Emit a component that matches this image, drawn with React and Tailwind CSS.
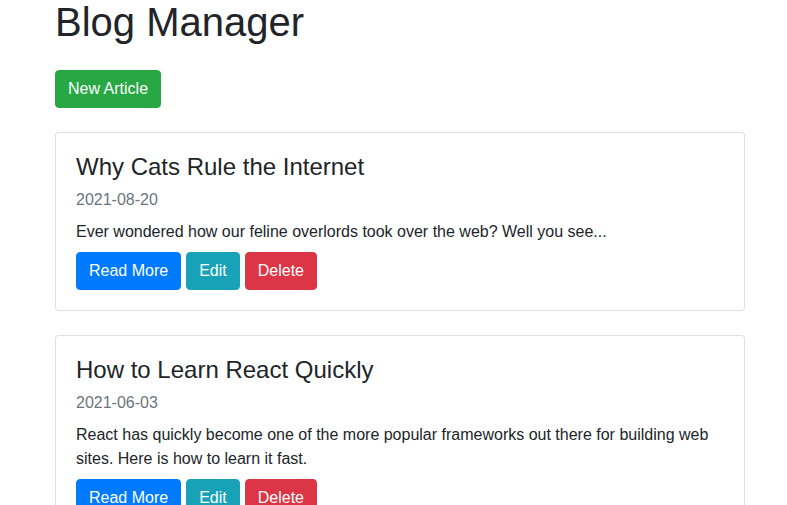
const articles = [
  {
    id: 1,
    title: 'Why Cats Rule the Internet',
    date: '2021-08-20',
    body: 'Ever wondered how our feline overlords took over the web? Well you see...',
  },
  {
    id: 2,
    title: 'How to Learn React Quickly',
    date: '2021-06-03',
    body: 'React has quickly become one of the more popular frameworks out there for building web sites. Here is how to learn it fast.',
  },
]

const Btn = ({ color, children }) => {
  const colors = {
    green: 'bg-[#28a745] border-[#28a745]',
    blue: 'bg-[#007bff] border-[#007bff]',
    teal: 'bg-[#17a2b8] border-[#17a2b8]',
    red: 'bg-[#dc3545] border-[#dc3545]',
  }
  return (
    <button className={`${colors[color]} border text-white text-base leading-6 px-3 py-[6px] rounded-[4px]`}>
      {children}
    </button>
  )
}

const ArticleCard = ({ article }) => {
  return (
    <div className="border border-[rgba(0,0,0,0.125)] rounded-[4px] bg-white p-5 mb-6">
      <h4 className="text-2xl leading-[1.2] text-[#212529] mb-[6px]">{article.title}</h4>
      <h6 className="text-base leading-6 text-[#6c757d] mb-2">{article.date}</h6>
      <p className="text-base leading-6 text-[#212529] mb-2">{article.body}</p>
      <div className="flex gap-[5px]">
        <Btn color="blue">Read More</Btn>
        <Btn color="teal">Edit</Btn>
        <Btn color="red">Delete</Btn>
      </div>
    </div>
  )
}

export default function App() {
  return (
    <div className="min-h-screen bg-white font-['Liberation_Sans',Arial,sans-serif]">
      <div className="w-[690px] ml-[55px]">
        <h1 className="text-[40px] leading-[1.2] text-[#212529] -mt-[2px] mb-[24px]">Blog Manager</h1>
        <div className="mb-6">
          <Btn color="green">New Article</Btn>
        </div>
        {articles.map((a) => (
          <ArticleCard key={a.id} article={a} />
        ))}
      </div>
    </div>
  )
}
